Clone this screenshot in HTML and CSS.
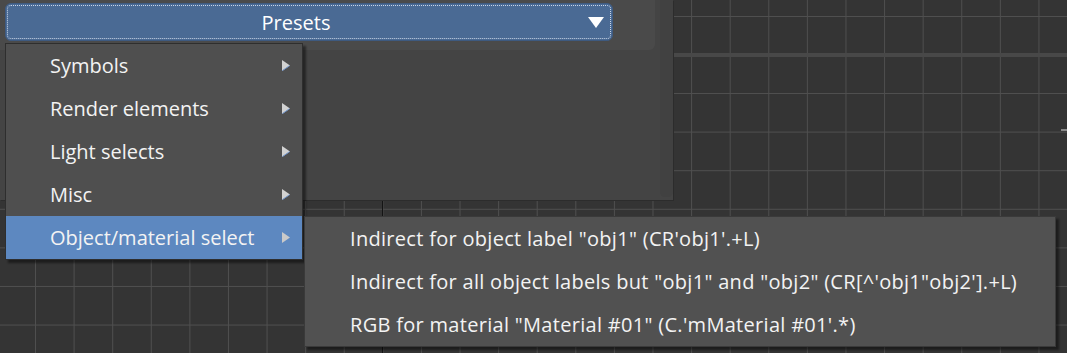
FILE: index.html
```html
<!DOCTYPE html>
<html>
<head>
<meta charset="utf-8">
<link rel="stylesheet" href="styles.css">
</head>
<body>
<div class="canvas">
  <div class="view view-top"></div>
  <div class="view-sep"></div>
  <div class="view view-bottom"><span class="axis"></span></div>
  <span class="tick"></span>

  <div class="panel">
    <div class="group">
      <button class="preset-btn">
        <span class="focus-ring"></span>
        <span class="btn-label">Presets</span>
        <svg class="btn-arrow" width="16" height="11" viewBox="0 0 16 11"><polygon points="0,0 16,0 8,11" fill="#ffffff"/></svg>
      </button>
    </div>
    <div class="scroll-strip"></div>
  </div>

  <div class="menu">
    <div class="menu-item"><span>Symbols</span><svg class="sub-arrow" width="8" height="11" viewBox="0 0 8 11"><polygon points="0,0 8,5.5 0,11" fill="#d2d2d2"/><line x1="0.3" y1="10.7" x2="7.7" y2="5.6" stroke="#6f93c9" stroke-width="1"/></svg></div>
    <div class="menu-item"><span>Render elements</span><svg class="sub-arrow" width="8" height="11" viewBox="0 0 8 11"><polygon points="0,0 8,5.5 0,11" fill="#d2d2d2"/><line x1="0.3" y1="10.7" x2="7.7" y2="5.6" stroke="#6f93c9" stroke-width="1"/></svg></div>
    <div class="menu-item"><span>Light selects</span><svg class="sub-arrow" width="8" height="11" viewBox="0 0 8 11"><polygon points="0,0 8,5.5 0,11" fill="#d2d2d2"/><line x1="0.3" y1="10.7" x2="7.7" y2="5.6" stroke="#6f93c9" stroke-width="1"/></svg></div>
    <div class="menu-item"><span>Misc</span><svg class="sub-arrow" width="8" height="11" viewBox="0 0 8 11"><polygon points="0,0 8,5.5 0,11" fill="#d2d2d2"/><line x1="0.3" y1="10.7" x2="7.7" y2="5.6" stroke="#6f93c9" stroke-width="1"/></svg></div>
    <div class="menu-item active"><span>Object/material select</span><svg class="sub-arrow" width="8" height="11" viewBox="0 0 8 11"><polygon points="0,0 8,5.5 0,11" fill="#c9c9c9"/></svg></div>
  </div>

  <div class="submenu">
    <div class="menu-item"><span>Indirect for object label "obj1" (CR'obj1'.+L)</span></div>
    <div class="menu-item"><span>Indirect for all object labels but "obj1" and "obj2" (CR[^'obj1"obj2'].+L)</span></div>
    <div class="menu-item"><span>RGB for material "Material #01" (C.'mMaterial #01'.*)</span></div>
  </div>
</div>
</body>
</html>
```

FILE: styles.css
```css
* { box-sizing: border-box; }

html, body {
  margin: 0;
  padding: 0;
  width: 1067px;
  height: 353px;
  overflow: hidden;
  background: #343434;
  font-family: "Open Sans", "Noto Sans", "DejaVu Sans", sans-serif;
}

.canvas {
  position: relative;
  width: 1067px;
  height: 353px;
  display: flex;
  flex-direction: column;
}

.view {
  position: relative;
  background-color: #343434;
  background-image:
    linear-gradient(to right, #4f4f4f 0 1px, transparent 1px),
    linear-gradient(to bottom, #4f4f4f 0 1px, transparent 1px);
  background-size: 38.6px 38.6px;
}

.view-top {
  height: 53px;
  background-position: 35px 16px;
}

.view-sep {
  height: 4px;
  background: #484848;
}

.view-bottom {
  flex: 1;
  background-position: 35px 36px;
}

.axis {
  position: absolute;
  left: 382px;
  top: 0;
  width: 1px;
  height: 100%;
  background: #141414;
}

.tick {
  position: absolute;
  left: 1061px;
  top: 129px;
  width: 6px;
  height: 2px;
  background: #8a8a8a;
}

/* floating panel */
.panel {
  position: absolute;
  left: 0;
  top: 0;
  width: 673px;
  height: 200px;
  background: #444444;
  display: flex;
  gap: 5px;
  align-items: flex-start;
  box-shadow: 1px 1px 0 #2c2c2c;
}

.group {
  width: 655px;
  height: 50px;
  background: #4a4a4a;
  border-bottom-right-radius: 6px;
  padding: 3px 0 0 5px;
}

.scroll-strip {
  width: 13px;
  height: 197px;
  background: #414141;
  border-radius: 0 0 5px 5px;
}

.preset-btn {
  position: relative;
  width: 608px;
  height: 38px;
  border: 1px solid #3e5a80;
  border-radius: 6px;
  background: #4a6a94;
  display: flex;
  align-items: center;
  justify-content: center;
  padding: 0;
  font-family: inherit;
}

.focus-ring {
  position: absolute;
  inset: 1px;
  border: 1px dotted rgba(225, 232, 245, 0.85);
  border-radius: 4px;
}

.btn-label {
  color: #ffffff;
  font-size: 20px;
  margin-left: -26px;
}

.btn-arrow {
  position: absolute;
  right: 8px;
  top: 13px;
}

/* menus */
.menu, .submenu {
  position: absolute;
  background: #4f4f4f;
  border: 1px solid #2e2e2e;
  box-shadow: 3px 3px 2px rgba(0, 0, 0, 0.45);
  display: flex;
  flex-direction: column;
}

.menu {
  left: 5px;
  top: 43px;
  width: 298px;
  height: 217px;
}

.submenu {
  left: 304px;
  top: 216px;
  width: 752px;
  height: 131px;
  background: #515151;
  border-color: #3a3a3a;
}

.menu-item {
  height: 43px;
  flex: none;
  display: flex;
  align-items: center;
  justify-content: space-between;
  padding: 0 12px 0 44px;
  color: #f3f3f3;
  font-size: 20px;
  white-space: nowrap;
}

.menu-item.active {
  background: #5d88c0;
}

.submenu .menu-item {
  padding-left: 45px;
  letter-spacing: 0.3px;
}

.sub-arrow {
  flex: none;
}
```
